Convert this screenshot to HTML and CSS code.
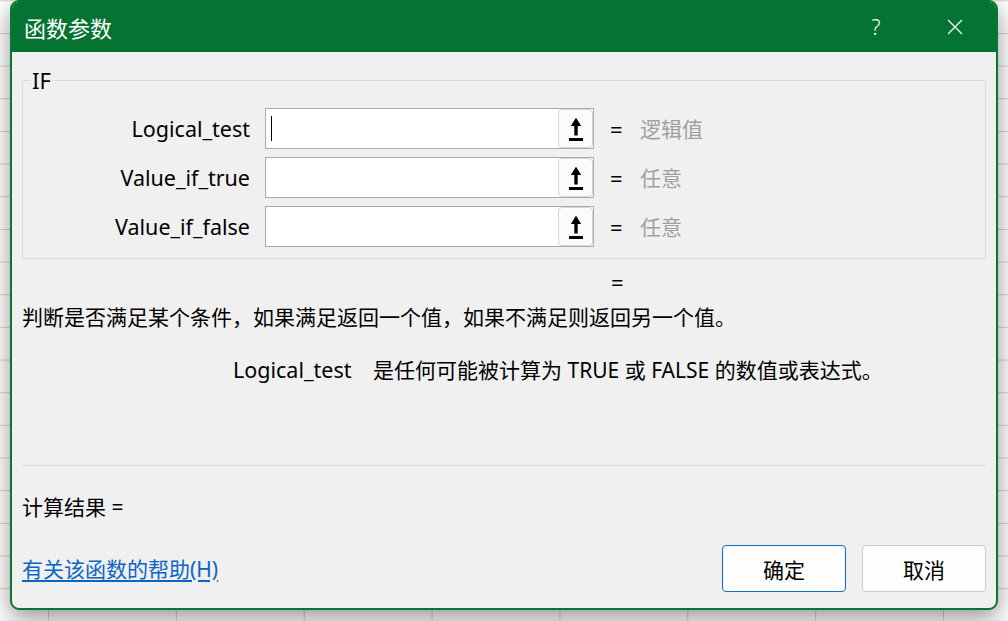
FILE: index.html
```html
<!DOCTYPE html>
<html lang="zh-CN">
<head>
<meta charset="utf-8">
<title>函数参数</title>
<link rel="stylesheet" href="styles.css">
</head>
<body>
<div class="dialog">
  <div class="titlebar">
    <span class="title">函数参数</span>
    <span class="tb-help">?</span>
    <span class="tb-close">
      <svg width="16" height="16" viewBox="0 0 16 16"><path d="M1 1 L15 15 M15 1 L1 15" stroke="#fff" stroke-width="1.3" fill="none"/></svg>
    </span>
  </div>
  <div class="content">
    <fieldset class="group">
      <legend>IF</legend>
      <div class="args">
        <div class="arg-row">
          <label class="arg-label">Logical_test</label>
          <div class="field"><span class="caret"></span><span class="ref"><svg width="14" height="24" viewBox="0 0 14 24"><path d="M7 0.7 L1.8 9 L12.2 9 Z" fill="#000"/><rect x="5.3" y="8.5" width="3.4" height="10" fill="#000"/><rect x="0" y="21" width="14" height="3" fill="#000"/></svg></span></div>
          <span class="eq">=</span>
          <span class="val">逻辑值</span>
        </div>
        <div class="arg-row">
          <label class="arg-label">Value_if_true</label>
          <div class="field"><span class="caret hidden"></span><span class="ref"><svg width="14" height="24" viewBox="0 0 14 24"><path d="M7 0.7 L1.8 9 L12.2 9 Z" fill="#000"/><rect x="5.3" y="8.5" width="3.4" height="10" fill="#000"/><rect x="0" y="21" width="14" height="3" fill="#000"/></svg></span></div>
          <span class="eq">=</span>
          <span class="val">任意</span>
        </div>
        <div class="arg-row">
          <label class="arg-label">Value_if_false</label>
          <div class="field"><span class="caret hidden"></span><span class="ref"><svg width="14" height="24" viewBox="0 0 14 24"><path d="M7 0.7 L1.8 9 L12.2 9 Z" fill="#000"/><rect x="5.3" y="8.5" width="3.4" height="10" fill="#000"/><rect x="0" y="21" width="14" height="3" fill="#000"/></svg></span></div>
          <span class="eq">=</span>
          <span class="val">任意</span>
        </div>
      </div>
    </fieldset>
    <div class="result-eq">=</div>
    <p class="desc">判断是否满足某个条件，如果满足返回一个值，如果不满足则返回另一个值。</p>
    <p class="arg-help"><span class="arg-name">Logical_test</span><span>是任何可能被计算为 TRUE 或 FALSE 的数值或表达式。</span></p>
    <div class="sep"></div>
    <div class="calc">计算结果 =</div>
    <div class="footer">
      <a class="help-link" href="#">有关该函数的帮助(H)</a>
      <div class="btns">
        <button class="btn btn-ok">确定</button>
        <button class="btn">取消</button>
      </div>
    </div>
  </div>
</div>
</body>
</html>
```
FILE: styles.css
```css
html, body {
  margin: 0;
  padding: 0;
}
body {
  width: 1008px;
  height: 621px;
  overflow: hidden;
  position: relative;
  background-color: #ffffff;
  background-image:
    linear-gradient(to right, #d4d4d4 1px, transparent 1px),
    linear-gradient(to bottom, #d4d4d4 1px, transparent 1px);
  background-size: 127.86px 32.67px, 127.86px 32.67px;
  background-position: 48px 0, 0 0.33px;
  font-family: "Noto Sans", "Noto Sans CJK SC", sans-serif;
  font-size: 21px;
  color: #000;
}
.dialog {
  position: absolute;
  left: 10px;
  top: 0;
  width: 988px;
  height: 610px;
  box-sizing: border-box;
  border: 2px solid #077634;
  border-radius: 9px;
  background: #f0f0f0;
  box-shadow: 0 8px 24px rgba(0, 0, 0, 0.42);
  display: flex;
  flex-direction: column;
  overflow: hidden;
}
.titlebar {
  height: 50px;
  background: #057331;
  color: #fff;
  display: flex;
  align-items: center;
  flex-shrink: 0;
}
.title {
  padding-left: 12px;
  font-size: 22px;
  line-height: 50px;
  flex: 1;
  position: relative;
  top: 1px;
}
.tb-help {
  width: 46px;
  text-align: center;
  font-size: 21px;
  font-weight: 300;
  margin-right: 33px;
  line-height: 50px;
}
.tb-close {
  width: 46px;
  height: 50px;
  display: flex;
  align-items: center;
  justify-content: center;
  margin-right: 18px;
}
.content {
  padding: 0 10px;
  display: flex;
  flex-direction: column;
}
.group {
  margin: 15px 0 0 0;
  padding: 15px 0 11px 0;
  border: 1px solid #d9d9d9;
  min-width: 0;
}
.group legend {
  margin-left: 7px;
  padding: 0 2px;
  line-height: 26px;
  font-size: 22px;
}
.args {
  display: flex;
  flex-direction: column;
  gap: 8px;
}
.arg-row {
  display: flex;
  align-items: center;
  height: 41px;
}
.arg-label {
  width: 227px;
  text-align: right;
  line-height: 30px;
  font-size: 21.5px;
}
.field {
  margin-left: 15px;
  width: 329px;
  height: 41px;
  box-sizing: border-box;
  border: 1px solid #ababab;
  background: #fff;
  display: flex;
  justify-content: space-between;
}
.caret {
  width: 1px;
  height: 25px;
  margin: 7px 0 0 5px;
  background: #000;
}
.caret.hidden {
  background: transparent;
}
.ref {
  width: 35px;
  height: 39px;
  box-sizing: border-box;
  border: 1px solid #d6d6d6;
  border-radius: 4px;
  background: #fbfbfb;
  display: flex;
  align-items: center;
  justify-content: center;
}
.ref svg {
  display: block;
}
.eq {
  margin-left: 16px;
  width: 30px;
  line-height: 30px;
  font-size: 22px;
}
.val {
  color: #a0a0a0;
  line-height: 30px;
}
.result-eq {
  margin: 8px 0 0 589px;
  line-height: 30px;
  height: 30px;
  font-size: 22px;
}
.desc {
  margin: 5px 0 0 0;
  line-height: 30px;
}
.arg-help {
  margin: 23px 0 0 0;
  line-height: 30px;
  display: flex;
}
.arg-name {
  margin-left: 211px;
  width: 140px;
  font-size: 21.5px;
}
.sep {
  margin-top: 80px;
  height: 1px;
  background: #dcdcdc;
}
.calc {
  margin-top: 26px;
  line-height: 30px;
}
.footer {
  margin-top: 23px;
  display: flex;
  align-items: center;
  justify-content: space-between;
}
.help-link {
  color: #0a66c2;
  text-decoration: underline;
  text-underline-offset: 3px;
  line-height: 30px;
}
.btns {
  display: flex;
  gap: 16px;
}
.btn {
  width: 124px;
  height: 47px;
  box-sizing: border-box;
  border: 1px solid #cccccc;
  border-radius: 4px;
  background: #fdfdfd;
  font-family: "Noto Sans", "Noto Sans CJK SC", sans-serif;
  font-size: 21px;
  color: #000;
  padding: 0;
}
.btn-ok {
  border-color: #0a6fc9;
}
```
